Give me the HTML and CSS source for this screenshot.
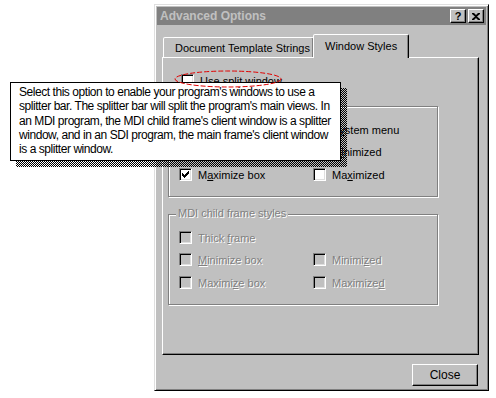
FILE: index.html
```html
<!DOCTYPE html>
<html lang="en">
<head>
  <meta charset="UTF-8" />
  <title>Advanced Options</title>
  <link rel="stylesheet" href="styles.css">
</head>
<body>
  <div class="screen">
    <div class="dialog">
      <div class="titlebar">
        <span class="title">Advanced Options</span>
        <div class="caption-buttons">
          <span class="cap-btn help">?</span>
          <span class="cap-btn">
            <svg width="8" height="7" viewBox="0 0 8 7"><path d="M0 0h2l2 2 2-2h2v1L5 3.5 8 6v1H6L4 5 2 7H0V6l3-2.5L0 1z" fill="#000"/></svg>
          </span>
        </div>
      </div>

      <div class="dialog-body">
        <div class="tabs">
          <div class="tab">Document Template Strings</div>
          <div class="tab active">Window Styles</div>
        </div>

        <div class="panel">
          <div class="check split-row">
            <span class="box"></span>
            <span class="label"><u>U</u>se split window</span>
          </div>

          <div class="group group-main">
            <span class="group-title">Main frame styles</span>
            <div class="group-grid">
              <div class="check"><span class="box checked"></span><span class="label">Thick <u>f</u>rame</span></div>
              <div class="check"><span class="box checked"></span><span class="label">S<u>y</u>stem menu</span></div>
              <div class="check"><span class="box checked"></span><span class="label"><u>M</u>inimize box</span></div>
              <div class="check"><span class="box"></span><span class="label">M<u>i</u>nimized</span></div>
              <div class="check"><span class="box checked"></span><span class="label">M<u>a</u>ximize box</span></div>
              <div class="check"><span class="box"></span><span class="label">Ma<u>x</u>imized</span></div>
            </div>
          </div>

          <div class="group group-child disabled">
            <span class="group-title">MDI child frame styles</span>
            <div class="group-grid">
              <div class="check"><span class="box"></span><span class="label">Thick <u>f</u>rame</span></div>
              <div class="check"></div>
              <div class="check"><span class="box"></span><span class="label"><u>M</u>inimize box</span></div>
              <div class="check"><span class="box"></span><span class="label">Minimi<u>z</u>ed</span></div>
              <div class="check"><span class="box"></span><span class="label">Maximi<u>z</u>e box</span></div>
              <div class="check"><span class="box"></span><span class="label">Maximize<u>d</u></span></div>
            </div>
          </div>
        </div>

        <div class="actions">
          <span class="btn">Close</span>
        </div>
      </div>
    </div>

    <div class="popup">
      <div class="tooltip">
        Select this option to enable your program's windows to use a<br>
        splitter bar. The splitter bar will split the program's main views. In<br>
        an MDI program, the MDI child frame's client window is a splitter<br>
        window, and in an SDI program, the main frame's client window<br>
        is a splitter window.
      </div>
    </div>

    <svg class="highlight" width="112" height="20" viewBox="0 0 112 20">
      <ellipse cx="56" cy="10" rx="53" ry="8" fill="none" stroke="#e00000" stroke-width="1" stroke-dasharray="5 2"/>
    </svg>
  </div>
</body>
</html>
```

FILE: styles.css
```css
* {
  box-sizing: border-box;
}

body {
  margin: 0;
  background: #ffffff;
  font-family: 'Liberation Sans', Arial, sans-serif;
  font-size: 11px;
  color: #000;
}

.screen {
  position: relative;
  width: 496px;
  height: 398px;
  overflow: hidden;
}

/* dialog frame */
.dialog {
  margin: 4px 0 0 154px;
  width: 335px;
  height: 387px;
  background: #c0c0c0;
  border: 1px solid;
  border-color: #dfdfdf #000 #000 #dfdfdf;
  box-shadow: inset 1px 1px #fff, inset -1px -1px #808080;
  padding: 2px;
  display: flex;
  flex-direction: column;
}

.titlebar {
  height: 18px;
  background: #808080;
  display: flex;
  align-items: center;
  justify-content: space-between;
  padding: 0 2px 0 3px;
}

.title {
  color: #c0c0c0;
  font-weight: bold;
  font-size: 12px;
}

.caption-buttons {
  display: flex;
  gap: 2px;
}

.cap-btn {
  width: 16px;
  height: 14px;
  background: #c0c0c0;
  border: 1px solid;
  border-color: #fff #000 #000 #fff;
  box-shadow: inset -1px -1px #808080;
  display: flex;
  align-items: center;
  justify-content: center;
}

.cap-btn.help {
  font-weight: bold;
  font-size: 11px;
  line-height: 1;
}

.dialog-body {
  flex: 1;
  padding: 9px 7px 0 5px;
  display: flex;
  flex-direction: column;
}

/* tabs */
.tabs {
  display: flex;
  align-items: flex-end;
  height: 24px;
  margin-bottom: -1px;
  position: relative;
  z-index: 1;
}

.tab {
  height: 20px;
  margin-bottom: 1px;
  border: 1px solid;
  border-bottom: none;
  border-color: #fff #000 transparent #fff;
  border-radius: 2px 2px 0 0;
  box-shadow: inset -1px 0 #808080;
  background: #c0c0c0;
  display: flex;
  align-items: center;
  padding: 1px 0 0 11px;
  white-space: nowrap;
}

.tab:first-child {
  width: 151px;
  margin-left: 1px;
}

.tab.active {
  width: 96px;
  height: 24px;
  margin-bottom: 0;
  margin-left: -1px;
  padding: 0 0 2px 11px;
}

.panel {
  width: 317px;
  height: 298px;
  border: 1px solid;
  border-color: #fff #000 #000 #fff;
  box-shadow: inset -1px -1px #808080;
  padding: 16px 0 0 4px;
  display: flex;
  flex-direction: column;
}

/* checkboxes */
.check {
  display: flex;
  align-items: center;
  gap: 6px;
  height: 13px;
  white-space: nowrap;
}

.box {
  width: 13px;
  height: 13px;
  flex: none;
  background: #fff;
  border: 1px solid;
  border-color: #808080 #fff #fff #808080;
  box-shadow: inset 1px 1px #000, inset -1px -1px #dfdfdf;
  position: relative;
}

.box.checked::after {
  content: "";
  position: absolute;
  left: 2px;
  top: 2px;
  width: 7px;
  height: 7px;
  background: url("data:image/svg+xml,%3Csvg xmlns='http://www.w3.org/2000/svg' width='7' height='7'%3E%3Cpath d='M0 2h1v1h1v1h1V3h1V2h1V1h1V0h1v3H6v1H5v1H4v1H3v1H2V6H1V5H0z' fill='%23000'/%3E%3C/svg%3E") no-repeat;
}

.split-row {
  margin-left: 14px;
}

.label u {
  text-decoration: underline;
  text-underline-offset: 1px;
}

/* group boxes */
.group {
  position: relative;
  width: 270px;
  height: 91px;
  margin-left: 1px;
  border: 1px solid #808080;
  box-shadow: inset 1px 1px #fff, 1px 1px #fff;
  padding: 16px 0 0 10px;
}

.group-main {
  margin-top: 19px;
}

.group-child {
  margin-top: 17px;
}

.group-title {
  position: absolute;
  top: -8px;
  left: 7px;
  padding: 0 2px;
  background: #c0c0c0;
}

.group-grid {
  display: grid;
  grid-template-columns: 134px 1fr;
  grid-auto-rows: 13px;
  row-gap: 9px;
}

.group-grid .check:nth-child(n+5) {
  margin-top: 1px;
}

.disabled .box {
  background: #c0c0c0;
}

.disabled .label,
.disabled .group-title {
  color: #808080;
  text-shadow: 1px 1px 0 #fff;
}

/* bottom button */
.actions {
  display: flex;
  justify-content: flex-end;
  padding: 9px 1px 0 0;
}

.btn {
  width: 66px;
  height: 22px;
  border: 1px solid;
  border-color: #fff #000 #000 #fff;
  box-shadow: inset -1px -1px #808080;
  display: flex;
  align-items: center;
  justify-content: center;
  font-size: 12px;
}

/* context help popup */
.popup {
  position: absolute;
  left: 10px;
  top: 82px;
  width: 331px;
  height: 79px;
  z-index: 2;
}

.popup::before {
  content: "";
  position: absolute;
  left: 6px;
  top: 6px;
  width: 100%;
  height: 100%;
  background: repeating-conic-gradient(#000 0 25%, transparent 0 50%) 0 0 / 2px 2px;
}

.tooltip {
  position: relative;
  height: 100%;
  background: #fff;
  border: 1px solid #000;
  padding: 2px 4px 0 8px;
  font-size: 12px;
  line-height: 14.25px;
  letter-spacing: -0.45px;
  white-space: nowrap;
}

.highlight {
  position: absolute;
  left: 172px;
  top: 69px;
  z-index: 3;
}
```
